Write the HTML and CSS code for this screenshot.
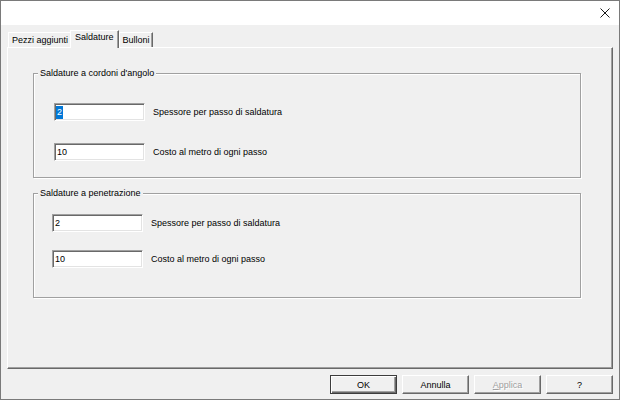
FILE: index.html
```html
<!DOCTYPE html>
<html>
<head>
<meta charset="utf-8">
<link rel="stylesheet" href="styles.css">
</head>
<body>
<div class="window">
  <div class="titlebar">
    <svg class="close" width="10" height="10" viewBox="0 0 10 10"><path d="M0.5 0.5 L9.5 9.5 M9.5 0.5 L0.5 9.5" stroke="#1a1a1a" stroke-width="1" fill="none"/></svg>
  </div>
  <div class="content">
    <div class="tabs">
      <div class="tab tab-first">Pezzi aggiunti</div>
      <div class="tab tab-active">Saldature</div>
      <div class="tab">Bulloni</div>
    </div>
    <div class="panel">
      <div class="group group-a">
        <div class="group-title">Saldature a cordoni d'angolo</div>
        <div class="rows">
          <div class="row"><div class="field"><span class="sel">2</span></div><span class="label">Spessore per passo di saldatura</span></div>
          <div class="row"><div class="field">10</div><span class="label">Costo al metro di ogni passo</span></div>
        </div>
      </div>
      <div class="group group-b">
        <div class="group-title">Saldature a penetrazione</div>
        <div class="rows">
          <div class="row"><div class="field">2</div><span class="label">Spessore per passo di saldatura</span></div>
          <div class="row"><div class="field">10</div><span class="label">Costo al metro di ogni passo</span></div>
        </div>
      </div>
    </div>
    <div class="footer">
      <button class="btn btn-default">OK</button>
      <button class="btn">Annulla</button>
      <button class="btn btn-disabled"><u>A</u>pplica</button>
      <button class="btn">?</button>
    </div>
  </div>
</div>
</body>
</html>
```
FILE: styles.css
```css
html, body {
  margin: 0;
  padding: 0;
}
body {
  font-family: "Liberation Sans", Arial, sans-serif;
  font-size: 9px;
  color: #000;
  background: #f0f0f0;
}
.window {
  width: 620px;
  height: 400px;
  box-sizing: border-box;
  border: 1px solid #7a7a7a;
  display: flex;
  flex-direction: column;
  background: #f0f0f0;
}
.titlebar {
  height: 24px;
  flex: none;
  background: #fff;
  display: flex;
  justify-content: flex-end;
  align-items: center;
  padding-right: 9px;
}
.close {
  display: block;
}
.content {
  flex: 1;
  display: flex;
  flex-direction: column;
  padding: 5px 6px 0 6px;
}
.tabs {
  display: flex;
  align-items: flex-end;
  padding-left: 1px;
  height: 17px;
}
.tab {
  height: 15px;
  box-sizing: border-box;
  padding: 2px 2px 0 3px;
  line-height: 11px;
  border-top: 1px solid #fff;
  border-left: 1px solid #fff;
  border-right: 1px solid #696969;
  box-shadow: inset -1px 0 0 #a0a0a0;
  white-space: nowrap;
}
.tab-first {
  padding: 2px 2px 0 3px;
  border-right: none;
  box-shadow: none;
}
.tab-active {
  position: relative;
  z-index: 1;
  height: 18px;
  margin-bottom: -1px;
  padding: 1px 4px 0 4px;
  background: #f0f0f0;
}
.panel {
  height: 322px;
  box-sizing: border-box;
  border: 1px solid;
  border-color: #fff #696969 #696969 #fff;
  box-shadow: inset -1px -1px 0 #a0a0a0;
  padding: 25px 31px 0 25px;
  display: flex;
  flex-direction: column;
}
.group {
  height: 105px;
  box-sizing: border-box;
  border: 1px solid #a0a0a0;
  box-shadow: 1px 1px 0 #fff, inset 1px 1px 0 #fff;
  display: flex;
  flex-direction: column;
}
.group-b {
  margin-top: 15px;
}
.group-title {
  align-self: flex-start;
  margin: -6px 0 0 4px;
  padding: 0 2px;
  line-height: 11px;
  background: #f0f0f0;
  white-space: nowrap;
}
.rows {
  display: flex;
  flex-direction: column;
}
.group-a .rows {
  margin-top: 24px;
  gap: 22px;
  padding-left: 20px;
}
.group-b .rows {
  margin-top: 15px;
  gap: 18px;
  padding-left: 18px;
}
.row {
  display: flex;
  align-items: center;
}
.field {
  width: 91px;
  height: 18px;
  box-sizing: border-box;
  background: #fff;
  border: 1px solid;
  border-color: #a0a0a0 #fff #fff #a0a0a0;
  box-shadow: inset 1px 1px 0 #696969, inset -1px -1px 0 #e3e3e3;
  padding-left: 2px;
  line-height: 16px;
}
.sel {
  display: inline-block;
  background: #0078d7;
  color: #fff;
  line-height: 13px;
  padding: 0 1px;
  margin-left: -1px;
  vertical-align: middle;
}
.label {
  margin-left: 8px;
  white-space: nowrap;
}
.footer {
  display: flex;
  justify-content: flex-end;
  gap: 5px;
  margin-top: 6px;
}
.btn {
  width: 67px;
  height: 19px;
  box-sizing: border-box;
  font-family: "Liberation Sans", Arial, sans-serif;
  font-size: 9px;
  color: #000;
  background: #f0f0f0;
  border: 1px solid;
  border-color: #fff #696969 #696969 #fff;
  box-shadow: inset -1px -1px 0 #a0a0a0;
  padding: 0;
  margin: 0;
}
.btn-default {
  border-color: #3c3c3c;
  box-shadow: inset 1px 1px 0 #fff, inset -1px -1px 0 #696969, inset -2px -2px 0 #a0a0a0;
}
.btn-disabled {
  color: #a0a0a0;
  text-shadow: 1px 1px 0 #fff;
}
```
